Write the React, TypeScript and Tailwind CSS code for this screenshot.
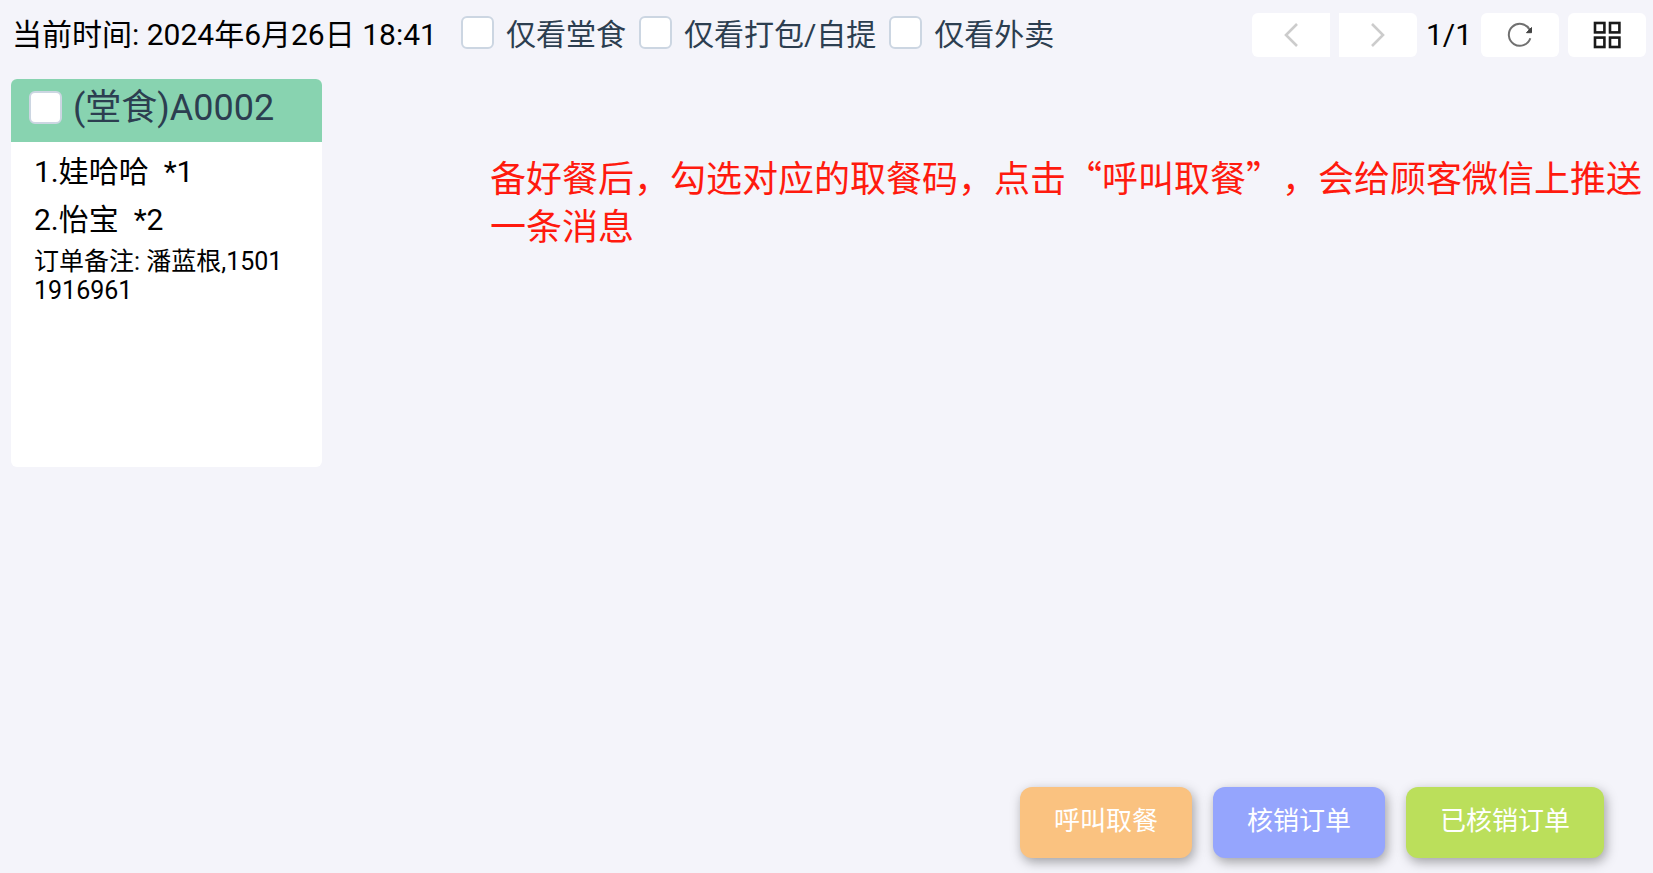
import React, { useState } from 'react';

interface OrderItem {
  name: string;
  count: number;
}

interface Order {
  code: string;
  items: OrderItem[];
  remark: string;
}

const orders: Order[] = [
  {
    code: '(堂食)A0002',
    items: [
      { name: '娃哈哈', count: 1 },
      { name: '怡宝', count: 2 },
    ],
    remark: '潘蓝根,15011916961',
  },
];

const filters = ['仅看堂食', '仅看打包/自提', '仅看外卖'];

const actions = [
  { label: '呼叫取餐', color: 'bg-[#fac280]' },
  { label: '核销订单', color: 'bg-[#95a5fd]' },
  { label: '已核销订单', color: 'bg-[#bbdf5b]' },
];

const checkboxClass =
  'size-[33px] shrink-0 appearance-none rounded-md border-2 border-[#ccd6e2] bg-white checked:bg-[#409eff]';

const toolButtonClass = 'flex h-11 w-[78px] items-center justify-center bg-white';

const RefreshIcon = () => (
  <svg width="26" height="26" viewBox="0 0 26 26" fill="none" stroke="#707070" strokeWidth="2">
    <path d="M23.3 16.2A11 11 0 1 1 22.5 7.5" />
    <path d="M24.5 5.5v5.2h-5z" fill="#444" stroke="#444" strokeWidth="1" />
  </svg>
);

const GridIcon = () => (
  <svg width="28" height="28" viewBox="0 0 28 28" fill="none" stroke="#1a1a1a" strokeWidth="2.6">
    <rect x="2" y="2" width="9.4" height="9.4" />
    <rect x="17" y="2" width="9.4" height="9.4" />
    <rect x="2" y="16.6" width="9.4" height="9.4" />
    <rect x="17" y="16.6" width="9.4" height="9.4" />
  </svg>
);

const Chevron: React.FC<{ d: string }> = ({ d }) => (
  <svg width="16" height="24" viewBox="0 0 16 24" fill="none" stroke="#ccc" strokeWidth="2.6">
    <path d={d} />
  </svg>
);

const OrderCard: React.FC<{ order: Order }> = ({ order }) => (
  <article className="min-h-[388px] w-[311px] shrink-0 overflow-hidden rounded-md bg-white">
    <label className="flex h-[63px] items-center gap-[11px] bg-[#88d3b0] pb-1.5 pl-[18px] text-4xl text-[#2c3e50]">
      <input type="checkbox" className={checkboxClass} />
      {order.code}
    </label>
    <div className="pt-1.5 pr-8 pl-[23px] text-black">
      <ul className="text-3xl leading-12">
        {order.items.map((item, i) => (
          <li key={item.name} className="whitespace-pre">
            {`${i + 1}.${item.name}  *${item.count}`}
          </li>
        ))}
      </ul>
      <p className="mt-[3px] break-all text-[25px] leading-[29px]">{`订单备注: ${order.remark}`}</p>
    </div>
  </article>
);

export default function App() {
  const [selected, setSelected] = useState<string[]>([]);

  const toggle = (label: string) => {
    setSelected((prev) =>
      prev.includes(label) ? prev.filter((f) => f !== label) : [...prev, label]
    );
  };

  return (
    <div className="flex min-h-screen flex-col bg-[#f4f4fa] font-['Roboto','Noto_Sans_CJK_SC',sans-serif]">
      <header className="flex items-center justify-between pt-[13px] pr-[7px] pl-3 text-3xl">
        <div className="flex items-center">
          <time className="mr-6 text-black">当前时间: 2024年6月26日 18:41</time>
          <div className="flex gap-[13px] text-[#2c3e50]">
            {filters.map((label) => (
              <label key={label} className="flex items-center gap-3">
                <input
                  type="checkbox"
                  className={`${checkboxClass} mb-1.5`}
                  checked={selected.includes(label)}
                  onChange={() => toggle(label)}
                />
                {label}
              </label>
            ))}
          </div>
        </div>
        <nav className="flex items-center gap-[9px] text-black">
          <button type="button" aria-label="上一页" className={`${toolButtonClass} rounded-l-md`}>
            <Chevron d="M14 1 3 12l11 11" />
          </button>
          <button type="button" aria-label="下一页" className={`${toolButtonClass} rounded-r-md`}>
            <Chevron d="m2 1 11 11L2 23" />
          </button>
          <span>1/1</span>
          <button type="button" aria-label="刷新" className={`${toolButtonClass} rounded-md`}>
            <RefreshIcon />
          </button>
          <button type="button" aria-label="切换布局" className={`${toolButtonClass} rounded-md`}>
            <GridIcon />
          </button>
        </nav>
      </header>

      <main className="flex flex-1 items-start pt-[22px] pl-[11px]">
        <OrderCard order={orders[0]} />
        <p className="ml-[168px] pt-[73px] font-['Noto_Sans_CJK_SC',sans-serif] text-4xl leading-12 text-[#ff1a0e] [text-spacing-trim:space-all]">
          备好餐后，勾选对应的取餐码，点击“呼叫取餐”，会给顾客微信上推送一条消息
        </p>
      </main>

      <footer className="flex justify-end gap-[21px] pr-[49px] pb-[15px]">
        {actions.map(({ label, color }) => (
          <button
            key={label}
            type="button"
            className={`h-[71px] rounded-xl px-[34px] pb-0.5 text-[26px] text-white shadow-[2px_4px_12px_rgba(0,0,0,0.35)] ${color}`}
          >
            {label}
          </button>
        ))}
      </footer>
    </div>
  );
}
